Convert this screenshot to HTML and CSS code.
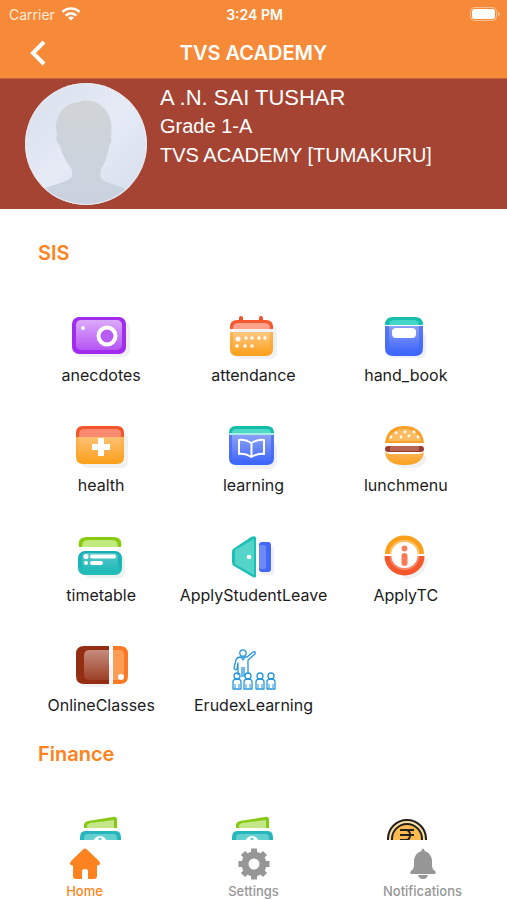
FILE: index.html
```html
<!DOCTYPE html>
<html lang="en">

<head>
    <meta charset="UTF-8">
    <meta name="viewport" content="width=device-width, initial-scale=1.0">
    <title>TVS ACADEMY</title>
    <link rel="stylesheet" href="styles.css">
</head>

<body>
    <!-- gradients shared by the icons -->
    <svg class="defs" width="0" height="0" aria-hidden="true">
        <defs>
            <linearGradient id="shine" x1="0" y1="0" x2="0" y2="1">
                <stop offset="0" stop-color="#fff" stop-opacity=".5" />
                <stop offset="1" stop-color="#fff" stop-opacity="0" />
            </linearGradient>
            <linearGradient id="amber" x1="0" y1="0" x2="0" y2="1">
                <stop offset="0" stop-color="#fdb558" />
                <stop offset="1" stop-color="#fba01c" />
            </linearGradient>
            <linearGradient id="blue" x1="0" y1="0" x2="0" y2="1">
                <stop offset="0" stop-color="#5a79f2" />
                <stop offset="1" stop-color="#3d65fa" />
            </linearGradient>
            <linearGradient id="teal" x1="0" y1="0" x2="0" y2="1">
                <stop offset="0" stop-color="#16aeb4" />
                <stop offset="1" stop-color="#22bdb8" />
            </linearGradient>
            <linearGradient id="photo" x1="0" y1="0" x2="1" y2="1">
                <stop offset="0" stop-color="#d8e0eb" />
                <stop offset=".5" stop-color="#e6ebf6" />
                <stop offset="1" stop-color="#d5deec" />
            </linearGradient>
            <linearGradient id="person" x1="0" y1="0" x2="0" y2="1">
                <stop offset="0" stop-color="#d0d4d7" />
                <stop offset="1" stop-color="#c9d2df" />
            </linearGradient>
            <clipPath id="round">
                <circle cx="61" cy="61" r="61" />
            </clipPath>
        </defs>
    </svg>

    <header class="header">
        <div class="status">
            <span class="carrier">Carrier
                <svg width="20" height="14" viewBox="0 0 20 14" fill="none" stroke="#fff" stroke-width="2.6">
                    <path d="M1.5 5C6 0.4 14 0.4 18.5 5" />
                    <path d="M4.7 8.6C7.7 5.6 12.3 5.6 15.3 8.6" />
                    <path d="M10 13.5L7 10.7C8.8 9.2 11.2 9.2 13 10.7Z" fill="#fff" stroke="none" />
                </svg>
            </span>
            <span class="time">3:24 PM</span>
            <span class="battery">
                <svg width="30" height="14" viewBox="0 0 30 14">
                    <rect x=".5" y=".5" width="26" height="13" rx="4" fill="none" stroke="#fff" stroke-opacity=".45" />
                    <rect x="2" y="2" width="23" height="10" rx="2.5" fill="#fff" />
                    <path d="M28 5v4q2-.5 2-2t-2-2z" fill="#fff" fill-opacity=".5" />
                </svg>
            </span>
        </div>
        <div class="nav">
            <button class="back" type="button" aria-label="Back">
                <svg width="16" height="26" viewBox="0 0 16 26" fill="none" stroke="#fff" stroke-width="4">
                    <path d="M14 2L3 13L14 24" />
                </svg>
            </button>
            <h1>TVS ACADEMY</h1>
        </div>
    </header>

    <section class="profile">
        <svg class="avatar" width="122" height="122" viewBox="0 0 122 122">
            <g clip-path="url(#round)">
                <rect width="122" height="122" fill="url(#photo)" />
                <path d="M57 18C67 16 80 22 84 33C87 40 87 46 86 54C87 57 86 61 84 63C83 73 79 81 76 86C74 95 76 97 84 100L104 107L122 122H0L20 105L38 99C47 96 49 93 46 85C41 79 37 71 35 63C31 59 31 55 32 51C29 40 33 28 43 22C48 19 53 20 57 18Z" fill="url(#person)" />
            </g>
            <circle cx="61" cy="61" r="60.5" fill="none" stroke="#ece8ee" />
        </svg>
        <div class="info">
            <p class="name">A .N. SAI TUSHAR</p>
            <p>Grade 1-A</p>
            <p>TVS ACADEMY [TUMAKURU]</p>
        </div>
    </section>

    <main class="content">
        <h2>SIS</h2>
        <div class="grid">
            <a class="item" href="#">
                <svg class="icon" viewBox="0 0 60 50">
                    <rect x="5" y="8" width="54" height="36" rx="7" fill="#f0f0f4" />
                    <rect x="1" y="4" width="54" height="37" rx="7" fill="#a12bef" />
                    <rect x="5" y="7" width="46" height="30" rx="5" fill="#b755f4" />
                    <rect x="5" y="7" width="46" height="30" rx="5" fill="url(#shine)" />
                    <circle cx="36" cy="23" r="8.5" fill="#b95cf2" stroke="#fff" stroke-width="4" />
                    <circle cx="12" cy="15" r="2" fill="#fff" />
                </svg>
                <span>anecdotes</span>
            </a>
            <a class="item" href="#">
                <svg class="icon" viewBox="0 0 60 50">
                    <rect x="11" y="12" width="43" height="34" rx="7" fill="#f1f1f4" />
                    <path d="M18 5v6M38 5v6" stroke="#f0522a" stroke-width="4" stroke-linecap="round" />
                    <path d="M7 16v-2q0-7 7-7h29q7 0 7 7v2z" fill="#f4582f" />
                    <path d="M10 16v-1q0-5 6-5h25q6 0 6 5v1z" fill="#fda18a" />
                    <path d="M7 19h43v17q0 7-7 7H14q-7 0-7-7z" fill="url(#amber)" />
                    <path d="M10 19h37v14q0 6-6 6H16q-6 0-6-6z" fill="url(#shine)" opacity=".5" />
                    <g fill="#fff">
                        <circle cx="15" cy="26" r="2.5" />
                        <circle cx="23" cy="25" r="1.7" />
                        <circle cx="29" cy="25" r="1.7" />
                        <circle cx="36" cy="25" r="1.7" />
                        <circle cx="42" cy="25" r="1.7" />
                        <circle cx="14" cy="33" r="1.7" />
                        <circle cx="22" cy="33" r="1.7" />
                        <circle cx="29" cy="33" r="1.7" />
                    </g>
                </svg>
                <span>attendance</span>
            </a>
            <a class="item" href="#">
                <svg class="icon" viewBox="0 0 60 50">
                    <rect x="14" y="18" width="36" height="27" rx="6" fill="#eef0f7" />
                    <path d="M9 12q0-8 8-8h22q8 0 8 8z" fill="#16bfad" />
                    <path d="M13 12q0-5 6-5h18q6 0 6 5z" fill="#44d5c6" />
                    <path d="M9 13h38v22q0 8-8 8H17q-8 0-8-8z" fill="url(#blue)" />
                    <path d="M13 13h30v20q0 5-5 5H18q-5 0-5-5z" fill="url(#shine)" opacity=".6" />
                    <rect x="16" y="15" width="24" height="10" rx="4" fill="#fff" />
                </svg>
                <span>hand_book</span>
            </a>
            <a class="item" href="#">
                <svg class="icon" viewBox="0 0 60 50">
                    <rect x="10" y="9" width="47" height="36" rx="7" fill="#f1f1f1" />
                    <path d="M5 15v-5q0-7 7-7h34q7 0 7 7v5z" fill="#f4562b" />
                    <path d="M8 15v-4q0-5 6-5h30q6 0 6 5v4z" fill="#fb8b70" />
                    <path d="M5 14h48v20q0 7-7 7H12q-7 0-7-7z" fill="url(#amber)" />
                    <path d="M8 14h42v18q0 6-6 6H14q-6 0-6-6z" fill="url(#shine)" opacity=".3" />
                    <path d="M30 15v18M21 24h18" stroke="#fff" stroke-width="6" />
                </svg>
                <span>health</span>
            </a>
            <a class="item" href="#">
                <svg class="icon" viewBox="0 0 60 50">
                    <rect x="11" y="18" width="43" height="28" rx="7" fill="#eef0f6" />
                    <path d="M6 11v-1q0-7 7-7h31q7 0 7 7v1z" fill="#14bcaa" />
                    <path d="M9 10q0-4 5-4h29q5 0 5 4z" fill="#51d9c8" />
                    <path d="M6 10h45v2H6z" fill="#a8ece5" />
                    <path d="M6 12h45v23q0 7-7 7H13q-7 0-7-7z" fill="url(#blue)" />
                    <path d="M9 12h39v21q0 6-6 6H15q-6 0-6-6z" fill="url(#shine)" opacity=".6" />
                    <path d="M28.5 20Q22 16 16 17V31Q22 30 28.5 34Q35 30 41 31V17Q35 16 28.5 20ZM28.5 20V34" fill="none" stroke="#fff" stroke-width="2" stroke-linejoin="round" />
                </svg>
                <span>learning</span>
            </a>
            <a class="item" href="#">
                <svg class="icon" viewBox="0 0 60 50">
                    <path d="M14 33h37q-1 10-12 12H27q-9-2-13-10z" fill="#f1f1f1" />
                    <path d="M9 20Q11 3 28.5 3T48 20z" fill="#fba026" />
                    <path d="M12 18Q15 6 28.5 6T45 18z" fill="#fdbb62" />
                    <rect x="9" y="23" width="39" height="6" rx="3" fill="#9b3c32" />
                    <rect x="14" y="23" width="29" height="5" rx="1" fill="#b66552" />
                    <path d="M9 29q3 2 6 2h27q4 0 6-2Q47 42 28.5 42T9 29z" fill="url(#amber)" />
                    <g fill="#fff">
                        <circle cx="15" cy="14" r="1.4" />
                        <circle cx="20" cy="10" r="1.4" />
                        <circle cx="25" cy="14" r="1.4" />
                        <circle cx="29" cy="9" r="1.4" />
                        <circle cx="33" cy="13" r="1.4" />
                        <circle cx="38" cy="9" r="1.4" />
                        <circle cx="42" cy="14" r="1.4" />
                    </g>
                </svg>
                <span>lunchmenu</span>
            </a>
            <a class="item" href="#">
                <svg class="icon" viewBox="0 0 60 50">
                    <rect x="13" y="21" width="41" height="24" rx="6" fill="#ecf1f1" />
                    <path d="M8 14q-2-10 8-10h26q10 0 8 10z" fill="#88ca0e" />
                    <path d="M11 14q0-7 6-7h24q6 0 6 7z" fill="#c0e97e" />
                    <rect x="7" y="18" width="44" height="24" rx="7" fill="url(#teal)" />
                    <rect x="11" y="20" width="36" height="18" rx="4" fill="url(#shine)" opacity=".6" />
                    <path d="M21 23.5h22M21 30h9" stroke="#fff" stroke-width="4" stroke-linecap="round" />
                    <circle cx="15" cy="23.5" r="2.5" fill="#fff" />
                    <circle cx="15" cy="30" r="2" fill="#fff" />
                </svg>
                <span>timetable</span>
            </a>
            <a class="item" href="#">
                <svg class="icon" viewBox="0 0 60 50">
                    <path d="M38 14h13v28H38z" fill="#f0f1f6" />
                    <path d="M10 16L28 4Q33 2 33 5V43Q33 46 28 43L11 33Q9 32 9 29V19Q9 17 10 16Z" fill="#1cbfb4" />
                    <path d="M12 17L31 6V42L12 31Z" fill="#55d5c9" />
                    <circle cx="26" cy="24" r="2.3" fill="#fff" />
                    <rect x="36" y="9" width="12" height="30" rx="3" fill="#4268f6" />
                    <rect x="36" y="12" width="7" height="24" rx="2" fill="#6d89f6" />
                </svg>
                <span>ApplyStudentLeave</span>
            </a>
            <a class="item" href="#">
                <svg class="icon" viewBox="0 0 60 50">
                    <path d="M49 25A18 18 0 0 1 28 43" fill="none" stroke="#f0f0f0" stroke-width="5" />
                    <path d="M11.5 21A17 16 0 0 1 45.5 21" fill="none" stroke="#fca01c" stroke-width="5" />
                    <path d="M14.5 21A14 13 0 0 1 42.5 21" fill="none" stroke="#fdc368" stroke-width="2" />
                    <path d="M11.5 23A17 16.5 0 0 0 45.5 23" fill="none" stroke="#f4582c" stroke-width="6" />
                    <path d="M14.5 23A14 13 0 0 0 42.5 23" fill="none" stroke="#fb8362" stroke-width="2" />
                    <circle cx="28.5" cy="15.5" r="3" fill="#fb8362" />
                    <path d="M28.5 23v7" stroke="#fb7955" stroke-width="6" stroke-linecap="round" />
                </svg>
                <span>ApplyTC</span>
            </a>
            <a class="item" href="#">
                <svg class="icon" viewBox="0 0 60 50">
                    <rect x="9" y="20" width="32" height="24" rx="6" fill="#f1f1f1" />
                    <path d="M38 3H13q-8 0-8 8v22q0 8 8 8h25z" fill="#942e12" />
                    <path d="M38 7H18q-5 0-5 6v18q0 6 5 6h20z" fill="#9e4027" />
                    <path d="M38 7H18q-5 0-5 6v18q0 6 5 6h20z" fill="url(#shine)" opacity=".8" />
                    <path d="M42 3h7q8 0 8 8v22q0 8-8 8h-7z" fill="#f97a22" />
                    <path d="M42 7h7q4 0 4 5v20q0 5-4 5h-7z" fill="#fd9d55" />
                    <circle cx="50" cy="34" r="3" fill="#fff" />
                </svg>
                <span>OnlineClasses</span>
            </a>
            <a class="item" href="#">
                <svg class="icon" viewBox="0 0 60 50" fill="none" stroke="#2496dc" stroke-width="1.3" stroke-linejoin="round">
                    <circle cx="20" cy="10" r="3.2" />
                    <path d="M15 31V20l-1 6q-2 2-3-1l2-8q1-3 5-3h6l6-5q3-1 2 2l-7 6v14M15 24v8M19 34V24M21 24v10M18 14l2 3l2-3" />
                    <circle cx="14" cy="33" r="3" />
                    <circle cx="25" cy="33" r="3" />
                    <circle cx="37" cy="33" r="3" />
                    <circle cx="48" cy="33" r="3" />
                    <path d="M10 46v-7q0-3 4-3t4 3v7zM21 46v-7q0-3 4-3t4 3v7zM33 46v-7q0-3 4-3t4 3v7zM44 46v-7q0-3 4-3t4 3v7z" />
                    <path d="M12 41v4M16 41v4M23 41v4M27 41v4M35 41v4M39 41v4M46 41v4M50 41v4" stroke-width="1" />
                </svg>
                <span>ErudexLearning</span>
            </a>
        </div>

        <h2>Finance</h2>
        <div class="grid">
            <a class="item" href="#" aria-label="Fees">
                <svg class="icon" viewBox="0 0 60 50">
                    <path d="M13 14v-3q0-3 4-4l25-4q4-1 4 3v8z" fill="#86c915" />
                    <path d="M16 14v-2q0-2 3-3l24-3v8z" fill="#c3e788" />
                    <path d="M9 24q0-7 5-7h31q5 0 5 7v20H9z" fill="#26b6bb" />
                    <path d="M13 24q0-4 4-4h25q4 0 4 4v16H13z" fill="#63cfcf" />
                    <circle cx="29" cy="29" r="7" fill="#fff" />
                    <circle cx="29" cy="25" r="1.5" fill="#63cfcf" />
                </svg>
            </a>
            <a class="item" href="#" aria-label="Payments">
                <svg class="icon" viewBox="0 0 60 50">
                    <path d="M13 14v-3q0-3 4-4l25-4q4-1 4 3v8z" fill="#86c915" />
                    <path d="M16 14v-2q0-2 3-3l24-3v8z" fill="#c3e788" />
                    <path d="M9 24q0-7 5-7h31q5 0 5 7v20H9z" fill="#26b6bb" />
                    <path d="M13 24q0-4 4-4h25q4 0 4 4v16H13z" fill="#63cfcf" />
                    <circle cx="29" cy="29" r="7" fill="#fff" />
                    <circle cx="29" cy="25" r="1.5" fill="#63cfcf" />
                </svg>
            </a>
            <a class="item" href="#" aria-label="Balance">
                <svg class="icon" viewBox="0 0 60 50">
                    <circle cx="31" cy="25" r="19" fill="#fbe0a5" stroke="#25211d" stroke-width="2" />
                    <circle cx="31" cy="25" r="15" fill="#fbb950" stroke="#25211d" stroke-width="2" />
                    <path d="M24 16h14M24 21h14M24 26h6q4 0 4-5t-4-5M26 26l8 8" fill="none" stroke="#25211d" stroke-width="2" />
                </svg>
            </a>
        </div>
    </main>

    <nav class="tabs">
        <a class="tab active" href="#">
            <svg width="32" height="32" viewBox="0 0 32 32" fill="currentColor">
                <path d="M14 1.5Q16-.5 18 1.5L30 13Q33 17 28 17.5V28Q28 31 25 31H19V23Q19 21 16 21T13 23V31H7Q4 31 4 28V17.5Q-1 17 2 13Z" />
            </svg>
            <span>Home</span>
        </a>
        <a class="tab" href="#">
            <svg width="32" height="32" viewBox="0 0 32 32" fill="none" stroke="currentColor">
                <circle cx="16" cy="16" r="9" stroke-width="7" />
                <path d="M16 .5V6M16 26v5.5M.5 16H6M26 16h5.5M5 5l4 4M23 23l4 4M27 5l-4 4M9 23l-4 4" stroke-width="6" />
            </svg>
            <span>Settings</span>
        </a>
        <a class="tab" href="#">
            <svg width="32" height="32" viewBox="0 0 32 32" fill="currentColor">
                <path d="M14.5 2Q16-1 17.5 2V3Q24 5 25 12V18Q25 21 28 23Q30 26 27 26H5Q2 26 4 23Q7 21 7 18V12Q8 5 14.5 3ZM11 27H21Q20 31 16 31T11 27Z" />
            </svg>
            <span>Notifications</span>
        </a>
    </nav>
</body>

</html>
```
FILE: styles.css
```css
* {
    margin: 0;
    padding: 0;
    box-sizing: border-box;
}

body {
    display: flex;
    flex-direction: column;
    height: 100vh;
    overflow: hidden;
    font-family: Inter, "Liberation Sans", sans-serif;
    color: #1c1c1c;
    background-color: #fff;
}

a {
    color: inherit;
    text-decoration: none;
}

svg {
    display: block;
}

.defs {
    position: absolute;
}

/* header */
.header {
    flex: none;
    color: #fff;
    background-color: #f68a38;
    border-bottom: 1px solid #c65f33;
}

.status {
    display: grid;
    grid-template-columns: 1fr auto 1fr;
    align-items: center;
    height: 28px;
    padding: 0 7px 0 9px;
    font-size: 14px;
}

.carrier {
    display: flex;
    align-items: center;
    gap: 6px;
    color: #ffead9;
}

.time {
    font-weight: 600;
}

.battery {
    justify-self: end;
}

.nav {
    display: grid;
    grid-template-columns: 60px 1fr 60px;
    align-items: center;
    height: 50px;
}

.back {
    display: flex;
    justify-content: center;
    padding-left: 16px;
    border: 0;
    background: none;
    cursor: pointer;
}

.nav h1 {
    font-size: 20px;
    font-weight: 600;
    text-align: center;
}

/* student */
.profile {
    flex: none;
    display: flex;
    gap: 13px;
    padding: 4px 25px;
    color: #fff;
    background-color: #a54432;
}

.avatar {
    flex: none;
}

.info {
    font-family: "Liberation Sans", Arial, sans-serif;
    font-size: 20px;
    line-height: 29px;
}

.name {
    font-size: 22px;
}

/* menu */
.content {
    flex: 1;
    min-height: 0;
    padding: 29px 25px 0;
    overflow-y: auto;
    scrollbar-width: none;
}

.content h2 {
    padding-left: 13px;
    font-size: 20px;
    font-weight: 600;
    line-height: 30px;
    color: #fd8320;
}

.grid {
    display: grid;
    grid-template-columns: repeat(3, 1fr);
    row-gap: 36px;
    padding: 45px 0 22px;
}

.item {
    display: flex;
    flex-direction: column;
    align-items: center;
    min-height: 74px;
    font-size: 16px;
    line-height: 24px;
}

.icon {
    width: 60px;
    height: 50px;
}

/* bottom tabs */
.tabs {
    flex: none;
    display: grid;
    grid-template-columns: repeat(3, 1fr);
    height: 60px;
    background-color: #fff;
}

.tab {
    display: flex;
    flex-direction: column;
    align-items: center;
    gap: 2px;
    padding-top: 8px;
    font-size: 13px;
    font-weight: 500;
    line-height: 18px;
    color: #969696;
}

.tab.active {
    color: #fd8320;
}
```
